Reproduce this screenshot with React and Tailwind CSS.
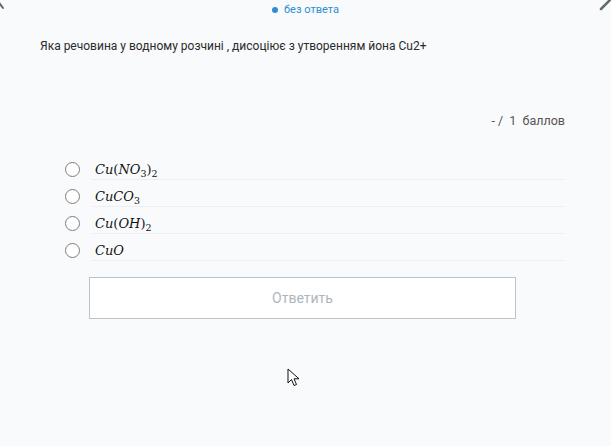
import React from 'react';

const Sub = ({ children }) => (
  <span className="not-italic text-[9.5px] relative top-[3px]">{children}</span>
);
const Up = ({ children }) => <span className="not-italic">{children}</span>;

const options = [
  { id: 1, label: <>Cu<Up>(</Up>NO<Sub>3</Sub><Up>)</Up><Sub>2</Sub></> },
  { id: 2, label: <>CuCO<Sub>3</Sub></> },
  { id: 3, label: <>Cu<Up>(</Up>OH<Up>)</Up><Sub>2</Sub></> },
  { id: 4, label: <>CuO</> },
];

export default function App() {
  return (
    <div
      className="relative w-[611px] h-[446px] overflow-hidden bg-[#f8fafc] text-[#333]"
      style={{ fontFamily: 'Roboto, "Liberation Sans", sans-serif' }}
    >
      {/* Edge nav arrows, mostly cut off */}
      <svg className="absolute left-[-8px] top-[-6px]" width="16" height="20" viewBox="0 0 16 20">
        <path d="M2 2 L11 14" stroke="#5f6b72" strokeWidth="2" fill="none" strokeLinecap="round" />
      </svg>
      <svg className="absolute right-[-4px] top-[-4px]" width="16" height="16" viewBox="0 0 16 16">
        <path d="M2 13 L13 2" stroke="#5f6b72" strokeWidth="2.5" fill="none" strokeLinecap="round" />
      </svg>

      {/* Status */}
      <div className="flex items-center justify-center gap-[6px] pt-[2px] h-[18px] text-[11px] text-[#2d8fd1]">
        <span className="w-[6px] h-[6px] rounded-full bg-[#2d8fd1]" />
        <span>без ответа</span>
      </div>

      {/* Question */}
      <div className="px-[40px] pt-[20px] text-[12px] leading-[16px] text-[#2b2b2b]">
        Яка речовина у водному розчині , дисоціює з утворенням йона Cu2+
      </div>

      {/* Score */}
      <div className="flex justify-end pr-[46px] pt-[59px] text-[12.5px] leading-[16px] text-[#555]">
        <span>-&nbsp;/&nbsp;&nbsp;1&nbsp;&nbsp;баллов</span>
      </div>

      {/* Options */}
      <div className="flex flex-col pl-[65px] pr-[46px] pt-[27px]">
        {options.map((o) => (
          <label key={o.id} className="flex items-center h-[27px] cursor-pointer">
            <span className="w-[15px] h-[15px] rounded-full border-[1.5px] border-[#7d7d7d] bg-white shrink-0" />
            <span className="flex-1 ml-[12px] h-[19px] mt-[1px] flex items-center border-b border-[#eceef0] pl-[3px]">
              <span
                className="italic text-[13px] leading-none text-[#111]"
                style={{ fontFamily: '"DejaVu Serif", "Liberation Serif", serif' }}
              >
                {o.label}
              </span>
            </span>
          </label>
        ))}
      </div>

      {/* Submit */}
      <div className="pl-[89px] pr-[95px] pt-[13px]">
        <button className="w-full h-[42px] bg-white border border-[#b9c3c9] text-[14px] text-[#aeb6bc]">
          Ответить
        </button>
      </div>

      {/* Mouse cursor */}
      <svg className="absolute left-[287px] top-[368px]" width="14" height="20" viewBox="0 0 14 20">
        <path
          d="M1 1 L1 15 L4.5 11.5 L7 17.5 L9.5 16.5 L7 10.8 L12 10.8 Z"
          fill="#fff"
          stroke="#111"
          strokeWidth="1"
          strokeLinejoin="round"
        />
      </svg>
    </div>
  );
}
